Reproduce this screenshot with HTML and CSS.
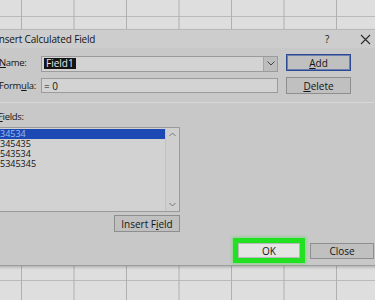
FILE: index.html
```html
<!DOCTYPE html>
<html lang="en">
<head>
    <meta charset="UTF-8">
    <meta name="viewport" content="width=device-width, initial-scale=1.0">
    <title>Insert Calculated Field</title>
    <link rel="stylesheet" href="styles.css">
</head>
<body>
    <div class="dialog">
        <div class="titlebar">
            <span class="title">Insert Calculated Field</span>
            <span class="help">?</span>
            <span class="close-x">
                <svg width="11" height="11" viewBox="0 0 11 11"><path d="M1 1L10 10M10 1L1 10" stroke="#2a2a2a" stroke-width="1.1" fill="none"/></svg>
            </span>
        </div>

        <div class="form-top">
            <label class="label"><u>N</u>ame:</label>
            <div class="input combo">
                <span class="selected">Field1</span>
                <span class="drop">
                    <svg width="8" height="5" viewBox="0 0 8 5"><path d="M0.5 0.5L4 4L7.5 0.5" stroke="#444" stroke-width="1" fill="none"/></svg>
                </span>
            </div>
            <button class="btn default"><u>A</u>dd</button>

            <label class="label">Form<u>u</u>la:</label>
            <div class="input">= 0</div>
            <button class="btn"><u>D</u>elete</button>
        </div>

        <div class="separator"></div>

        <div class="fields">
            <label class="label"><u>F</u>ields:</label>
            <div class="listbox">
                <ul class="items">
                    <li class="active">34534</li>
                    <li>345435</li>
                    <li>543534</li>
                    <li>5345345</li>
                </ul>
                <div class="scrollbar">
                    <svg width="7" height="5" viewBox="0 0 7 5"><path d="M0.5 4L3.5 1L6.5 4" stroke="#777" stroke-width="1" fill="none"/></svg>
                    <svg width="7" height="5" viewBox="0 0 7 5"><path d="M0.5 1L3.5 4L6.5 1" stroke="#777" stroke-width="1" fill="none"/></svg>
                </div>
            </div>
            <button class="btn insert">Insert F<u>i</u>eld</button>
        </div>

        <div class="actions">
            <button class="btn ok">OK</button>
            <button class="btn close">Close</button>
        </div>
    </div>
</body>
</html>
```

FILE: styles.css
```css
body {
    margin: 0;
    height: 300px;
    overflow: hidden;
    font-family: 'Open Sans', 'Noto Sans', sans-serif;
    font-size: 9.5px;
    color: #141414;
    background-color: #dedede;
    background-image:
        linear-gradient(to right, #b0b0b0 0, #b0b0b0 1px, transparent 1px),
        linear-gradient(to bottom, #bababa 0, #bababa 1px, transparent 1px);
    background-size: 52.5px 100%, 100% 22px;
    background-position: 21px 0, 0 16px;
}
.dialog {
    margin: 29px 0 0 -4px;
    width: 384px;
    height: 236px;
    box-sizing: border-box;
    padding: 0 6px 6px 3px;
    background: #c8c8c8;
    border-top: 1px solid #b8b8b8;
    box-shadow: 0 1px 0 #9c9c9c, 0 2px 3px rgba(0, 0, 0, 0.25);
    display: flex;
    flex-direction: column;
}
.titlebar {
    height: 18px;
    display: flex;
    align-items: center;
    margin-left: -3px;
    margin-right: -6px;
    background: #cdcdcd;
    font-size: 10px;
    letter-spacing: -0.15px;
}
.title {
    flex: 1;
}
.help {
    width: 10px;
    margin-right: 25px;
}
.close-x {
    display: flex;
    margin-right: 9px;
}
.form-top {
    margin-top: 6px;
    display: grid;
    grid-template-columns: 34px 237px 65px;
    grid-auto-rows: 17px;
    column-gap: 8px;
    row-gap: 6px;
    align-items: center;
}
.label {
    white-space: nowrap;
    font-size: 9.5px;
    letter-spacing: -0.3px;
}
.input {
    height: 15px;
    box-sizing: border-box;
    border: 1px solid #9b9b9b;
    background: #d3d3d3;
    display: flex;
    align-items: center;
    padding-left: 2px;
    font-size: 10px;
}
.combo {
    margin-top: 2px;
    height: 16px;
}
.selected {
    background: #151515;
    color: #e8e8e8;
    padding: 0 2px;
    line-height: 11px;
}
.drop {
    margin-left: auto;
    width: 13px;
    height: 14px;
    border-left: 1px solid #a4a4a4;
    background: #bdbdbd;
    display: flex;
    align-items: center;
    justify-content: center;
}
.btn {
    font: inherit;
    font-size: 10px;
    color: inherit;
    height: 17px;
    padding: 0;
    background: #c0c0c0;
    border: 1px solid #8e8e8e;
    display: flex;
    align-items: center;
    justify-content: center;
}
.default {
    border: 1px solid #2c4a94;
    box-shadow: inset 0 0 0 1px #6b7fae;
}
.separator {
    margin-top: 8px;
    margin-left: -3px;
    height: 1px;
    background: #d8d8d8;
}
.fields {
    width: 181px;
    margin-top: 8px;
    display: flex;
    flex-direction: column;
    align-items: flex-end;
}
.fields .label {
    align-self: flex-start;
    line-height: 12px;
    margin-left: -1px;
}
.listbox {
    margin-top: 4px;
    margin-left: -4px;
    width: 185px;
    height: 85px;
    box-sizing: border-box;
    border: 1px solid #9a9a9a;
    background: #d2d2d2;
    display: flex;
}
.items {
    flex: 1;
    list-style: none;
    margin: 0;
    padding: 1px 0 0;
    font-size: 9px;
}
.items li {
    height: 10px;
    line-height: 10px;
    padding-left: 4px;
}
.items li.active {
    background: #1d49b4;
    color: #9dbdf0;
}
.scrollbar {
    width: 13px;
    border-left: 1px solid #c2c2c2;
    background: #cfcfcf;
    display: flex;
    flex-direction: column;
    justify-content: space-between;
    align-items: center;
    padding: 4px 0;
}
.insert {
    margin-top: 3px;
    width: 66px;
}
.actions {
    margin-top: 11px;
    display: flex;
    justify-content: flex-end;
    gap: 10px;
}
.ok {
    width: 62px;
    height: 15px;
    background: #e4e4e4;
    border: 1px solid #b9b9b9;
    box-shadow: 0 0 0 5px #22e022, 0 0 3px 6px rgba(40, 230, 40, 0.4);
}
.close {
    width: 64px;
    height: 16px;
}
```
